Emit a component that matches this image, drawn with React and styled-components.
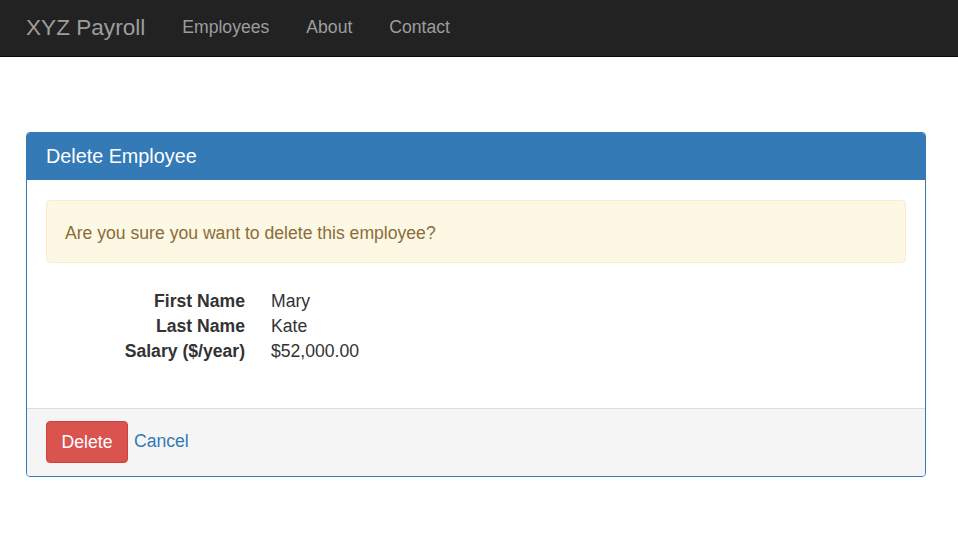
import React from 'react';
import styled, { createGlobalStyle } from 'styled-components';

const GlobalStyle = createGlobalStyle`
    body {
        margin: 0;
        background: #fff;
        color: #333;
        font-family: "Liberation Sans", Arial, Helvetica, sans-serif;
        font-size: 17.6px;
        line-height: 25px;
    }
    * {
        box-sizing: border-box;
    }
`

const Navbar = styled.nav`
    display: flex;
    align-items: center;
    height: 57px;
    padding: 0 0 2px 26px;
    background-color: #222;
    border-bottom: 1px solid #080808;
`

const Brand = styled.a`
    color: #9d9d9d;
    font-size: 22.6px;
    text-decoration: none;
    margin-right: 18.5px;
`

const NavLink = styled.a`
    color: #9d9d9d;
    font-size: 17.6px;
    text-decoration: none;
    padding: 0 18.5px;
`

const Page = styled.main`
    padding: 75px 32px 0 26px;
`

const Panel = styled.section`
    border: 1px solid #337ab7;
    border-radius: 4px;
    overflow: hidden;
`

const PanelHeading = styled.div`
    background-color: #337ab7;
    color: #fff;
    height: 47px;
    display: flex;
    align-items: center;
    padding: 0 19px;
    font-size: 19.8px;
`

const PanelBody = styled.div`
    padding: 20px 19px 0;
`

const Alert = styled.div`
    background-color: #fcf8e3;
    border: 1px solid #faebcc;
    color: #8a6d3b;
    border-radius: 4px;
    height: 63px;
    display: flex;
    align-items: center;
    padding: 3px 18px 0;
    margin-bottom: 26px;
`

const DetailList = styled.dl`
    display: grid;
    grid-template-columns: 199px 1fr;
    column-gap: 26px;
    margin: 0 0 44px;
    dt {
        font-weight: bold;
        text-align: right;
    }
    dd {
        margin: 0;
    }
`

const PanelFooter = styled.div`
    background-color: #f5f5f5;
    border-top: 1px solid #ddd;
    padding: 12px 19px 13px;
    display: flex;
    align-items: center;
    gap: 6px;
`

const DangerButton = styled.button`
    background-color: #d9534f;
    border: 1px solid #d43f3a;
    color: #fff;
    border-radius: 4px;
    height: 42px;
    width: 82px;
    font-family: inherit;
    font-size: 17.6px;
    padding: 0;
`

const CancelLink = styled.a`
    color: #337ab7;
    text-decoration: none;
    margin-bottom: 2px;
`

const employee = [
    ['First Name', 'Mary'],
    ['Last Name', 'Kate'],
    ['Salary ($/year)', '$52,000.00']
]

export default function App() {
    return (
        <>
            <GlobalStyle />
            <Navbar>
                <Brand href="#">XYZ Payroll</Brand>
                <NavLink href="#">Employees</NavLink>
                <NavLink href="#">About</NavLink>
                <NavLink href="#">Contact</NavLink>
            </Navbar>
            <Page>
                <Panel>
                    <PanelHeading>Delete Employee</PanelHeading>
                    <PanelBody>
                        <Alert>Are you sure you want to delete this employee?</Alert>
                        <DetailList>
                            {employee.map(([label, value]) => (
                                <React.Fragment key={label}>
                                    <dt>{label}</dt>
                                    <dd>{value}</dd>
                                </React.Fragment>
                            ))}
                        </DetailList>
                    </PanelBody>
                    <PanelFooter>
                        <DangerButton>Delete</DangerButton>
                        <CancelLink href="#">Cancel</CancelLink>
                    </PanelFooter>
                </Panel>
            </Page>
        </>
    );
}
